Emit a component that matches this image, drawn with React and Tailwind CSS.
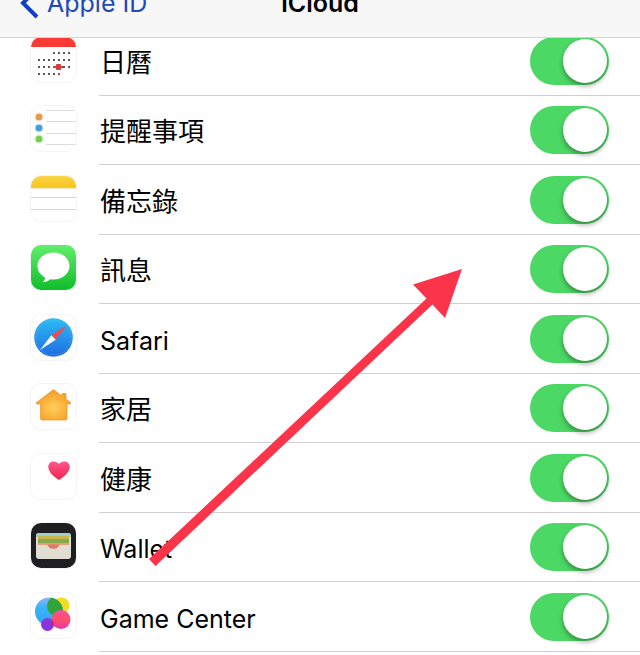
import { useState } from "react";
import clsx from "clsx";

const DOT_ROWS = [
  { y: 16, from: 3 },
  { y: 23, from: 0 },
  { y: 30, from: 0 },
  { y: 37, from: 0, to: 4 },
];

function CalendarIcon() {
  return (
    <svg viewBox="0 0 45 45" className="size-full">
      <rect width="45" height="45" fill="#fff" />
      <rect width="45" height="10" fill="#f93a35" />
      {DOT_ROWS.map(({ y, from, to = 6 }) =>
        Array.from({ length: to - from + 1 }, (_, i) => (
          <circle key={`${y}-${i}`} cx={8 + (from + i) * 5} cy={y} r="1" fill="#222" />
        ))
      )}
      <rect x="22" y="29" width="10" height="2" fill="#c9453f" />
      <rect x="25" y="27" width="5" height="6" rx="1" fill="#d2403a" />
      <circle cx="28" cy="37" r="1" fill="#d2403a" />
    </svg>
  );
}

function RemindersIcon() {
  return (
    <svg viewBox="0 0 45 45" className="size-full">
      <rect width="45" height="45" fill="#fff" />
      <path d="M15 4.5H45M15 15.5H45M15 27.5H45M15 38.5H45" stroke="#dcdcdc" />
      <circle cx="8" cy="11" r="4.5" fill="#f9e3cb" />
      <circle cx="8" cy="11" r="3.3" fill="#e5994a" />
      <circle cx="8" cy="22" r="4.5" fill="#cde6f5" />
      <circle cx="8" cy="22" r="3.3" fill="#3f9fd6" />
      <circle cx="8" cy="33" r="4.5" fill="#d8f3cb" />
      <circle cx="8" cy="33" r="3.3" fill="#72cf4f" />
    </svg>
  );
}

function NotesIcon() {
  return (
    <svg viewBox="0 0 45 45" className="size-full">
      <defs>
        <linearGradient id="notes" x2="0" y2="1">
          <stop stopColor="#fbd54a" />
          <stop offset="1" stopColor="#f6c51c" />
        </linearGradient>
      </defs>
      <rect width="45" height="45" fill="#fff" />
      <rect width="45" height="11" fill="url(#notes)" />
      <path d="M0 11.8H45" stroke="#d9c891" strokeWidth="1.5" />
      <path d="M0 21.5H45M0 33.5H45" stroke="#d8d8d8" />
    </svg>
  );
}

function MessagesIcon() {
  return (
    <svg viewBox="0 0 45 45" className="size-full">
      <defs>
        <linearGradient id="messages" x2="0" y2="1">
          <stop stopColor="#62ee6c" />
          <stop offset="1" stopColor="#10bd29" />
        </linearGradient>
      </defs>
      <rect width="45" height="45" fill="url(#messages)" />
      <path
        d="M22.5 7.5C13.5 7.5 6.5 13.5 6.5 21C6.5 26 9.5 30 14 32.5C14 34.5 13 36 11.5 37.3C14.5 37.3 17.5 36.3 19 34.3C20 34.5 21.3 34.6 22.5 34.6C31.5 34.6 38.5 28.5 38.5 21C38.5 13.5 31.5 7.5 22.5 7.5Z"
        fill="#fff"
      />
    </svg>
  );
}

function SafariIcon() {
  return (
    <svg viewBox="0 0 45 45" className="size-full">
      <defs>
        <linearGradient id="safari" x2="0" y2="1">
          <stop stopColor="#2bbdf5" />
          <stop offset="1" stopColor="#1f6be0" />
        </linearGradient>
      </defs>
      <rect width="45" height="45" fill="#fff" />
      <circle cx="22.5" cy="22.5" r="19.3" fill="url(#safari)" />
      <circle cx="22.5" cy="22.5" r="17.5" fill="none" stroke="#8fcdf7" strokeOpacity=".5" strokeWidth="1.5" strokeDasharray=".6 1.6" />
      <path d="M36 10L20.3 20.3L24.7 24.7Z" fill="#ec4c50" />
      <path d="M9 35L20.3 20.3L24.7 24.7Z" fill="#f7fafc" />
    </svg>
  );
}

function HomeIcon() {
  return (
    <svg viewBox="0 0 45 45" className="size-full">
      <defs>
        <radialGradient id="home" cx=".5" cy=".6" r=".6">
          <stop stopColor="#ffd05c" />
          <stop offset="1" stopColor="#f59a22" />
        </radialGradient>
      </defs>
      <rect width="45" height="45" fill="#fff" />
      <path
        d="M22.5 5.5L31 12V9.5H35V15L39.5 18.5V20H36V34.5Q36 36 34.5 36H11Q9.5 36 9.5 34.5V20H5.5V18.5Z"
        fill="url(#home)"
        stroke="#eb9a2c"
        strokeWidth=".7"
        strokeLinejoin="round"
      />
    </svg>
  );
}

function HealthIcon() {
  return (
    <svg viewBox="0 0 45 45" className="size-full">
      <defs>
        <linearGradient id="health" x2="0" y2="1">
          <stop stopColor="#fb5a8d" />
          <stop offset="1" stopColor="#f2224f" />
        </linearGradient>
      </defs>
      <rect width="45" height="45" fill="#fff" />
      <path
        d="M28 26C23.5 23.3 17.3 18.5 17.3 12.8C17.3 9.5 19.6 7.4 22.5 7.4C25 7.4 26.8 8.3 28 10C29.2 8.3 31 7.4 33.5 7.4C36.4 7.4 38.7 9.5 38.7 12.8C38.7 18.5 32.5 23.3 28 26Z"
        fill="url(#health)"
      />
    </svg>
  );
}

function WalletIcon() {
  return (
    <svg viewBox="0 0 45 45" className="size-full">
      <rect width="45" height="45" fill="#1f1f21" />
      <rect x="5" y="10" width="35" height="26" rx="3" fill="#e0ddd2" />
      <path d="M5 14V13Q5 10 8 10H37Q40 10 40 13V14Z" fill="#9fcbd3" />
      <rect x="7" y="13" width="31" height="3" fill="#c9b74c" />
      <rect x="7" y="16" width="31" height="4" fill="#87a94c" />
      <rect x="7" y="20" width="31" height="2" fill="#e3a07c" />
      <path d="M16 21.5H29C27.5 23.5 26.5 25.8 22.5 25.8C18.5 25.8 17.5 23.5 16 21.5Z" fill="#e67863" />
    </svg>
  );
}

function GameCenterIcon() {
  return (
    <svg viewBox="0 0 45 45" className="size-full">
      <defs>
        <linearGradient id="game-blue" x2="0" y2="1">
          <stop stopColor="#8fb6f0" />
          <stop offset=".4" stopColor="#35b2f7" />
          <stop offset="1" stopColor="#3aa3f2" />
        </linearGradient>
        <linearGradient id="game-pink" x2="0" y2="1">
          <stop stopColor="#fb4f9a" />
          <stop offset=".5" stopColor="#ff4f6b" />
          <stop offset="1" stopColor="#e836a8" />
        </linearGradient>
        <clipPath id="game-overlap">
          <circle cx="18" cy="18.5" r="14" />
        </clipPath>
      </defs>
      <rect width="45" height="45" fill="#fff" />
      <circle cx="30.5" cy="12.5" r="8" fill="#f3dc27" />
      <circle cx="18" cy="18.5" r="14" fill="url(#game-blue)" />
      <circle cx="26" cy="13" r="10" fill="#30a43b" clipPath="url(#game-overlap)" />
      <circle cx="30" cy="26.5" r="9.5" fill="url(#game-pink)" />
      <circle cx="16.5" cy="31.5" r="6.5" fill="#8c32de" />
      <path d="M20.5 27.5A6.5 6.5 0 0 1 22.5 33.5A9.5 9.5 0 0 1 20.5 27.5Z" fill="#c0247e" />
    </svg>
  );
}

const APPS = [
  { id: "calendar", label: "日曆", lang: "zh-Hant", Icon: CalendarIcon },
  { id: "reminders", label: "提醒事項", lang: "zh-Hant", Icon: RemindersIcon },
  { id: "notes", label: "備忘錄", lang: "zh-Hant", Icon: NotesIcon },
  { id: "messages", label: "訊息", lang: "zh-Hant", Icon: MessagesIcon },
  { id: "safari", label: "Safari", lang: "en", Icon: SafariIcon },
  { id: "home", label: "家居", lang: "zh-Hant", Icon: HomeIcon },
  { id: "health", label: "健康", lang: "zh-Hant", Icon: HealthIcon },
  { id: "wallet", label: "Wallet", lang: "en", Icon: WalletIcon },
  { id: "game-center", label: "Game Center", lang: "en", Icon: GameCenterIcon },
];

function AppRow({ id, label, lang, Icon }) {
  const [on, setOn] = useState(true);

  return (
    <li className="flex items-center gap-[23px] pl-[31px] odd:h-[70px] even:h-[69px]">
      <span className="mb-1 size-[45px] shrink-0 overflow-hidden rounded-[10px] ring-1 ring-neutral-100" aria-hidden="true">
        <Icon />
      </span>
      <div className="flex h-full flex-1 items-center justify-between border-b border-[#cfced2] pr-[31px]">
        <label htmlFor={id} lang={lang} className={clsx("pt-1 pl-px", lang === "zh-Hant" && "text-[26px]")}>
          {label}
        </label>
        <input
          id={id}
          type="checkbox"
          role="switch"
          checked={on}
          onChange={(e) => setOn(e.target.checked)}
          className="flex h-12 w-[79px] shrink-0 cursor-pointer appearance-none items-center rounded-full bg-neutral-200 p-0.5 transition-colors before:size-11 before:rounded-full before:bg-white before:shadow-[0_3px_5px_rgba(0,0,0,0.35)] before:transition-transform checked:bg-[#4cd864] checked:before:translate-x-[31px]"
        />
      </div>
    </li>
  );
}

export default function App() {
  return (
    <div className="relative min-h-screen overflow-hidden bg-white font-['Inter','Noto_Sans_CJK_TC',sans-serif] text-[25px] leading-[26px] text-black">
      {/* Nav bar, scrolled partly out of view */}
      <header className="relative z-10 grid h-[38px] grid-cols-[1fr_auto_1fr] content-end items-center overflow-hidden border-b border-[#d4d4d6] bg-[#f7f7f7] pb-[18px]">
        <a href="#apple-id" className="flex items-center gap-2 pl-5 text-[#2349b8]">
          <svg viewBox="0 0 19 32" className="h-8 w-[19px] shrink-0" fill="none" stroke="#0f3fc4" strokeWidth="4" aria-hidden="true">
            <path d="M17 2L3 16L17 30" />
          </svg>
          Apple ID
        </a>
        <h1 className="font-semibold">iCloud</h1>
      </header>

      <main>
        <ul className="-mt-3">
          {APPS.map((app) => (
            <AppRow key={app.id} {...app} />
          ))}
        </ul>
      </main>

      {/* Pointer towards the Messages switch */}
      <svg
        viewBox="140 260 330 310"
        className="pointer-events-none absolute top-[260px] left-[140px] h-[310px] w-[330px]"
        aria-hidden="true"
      >
        <path d="M462 269L445 318L432.5 304.5L155.5 566L149 559L426.5 298.5L413 284.5Z" fill="#fb3449" />
      </svg>
    </div>
  );
}
